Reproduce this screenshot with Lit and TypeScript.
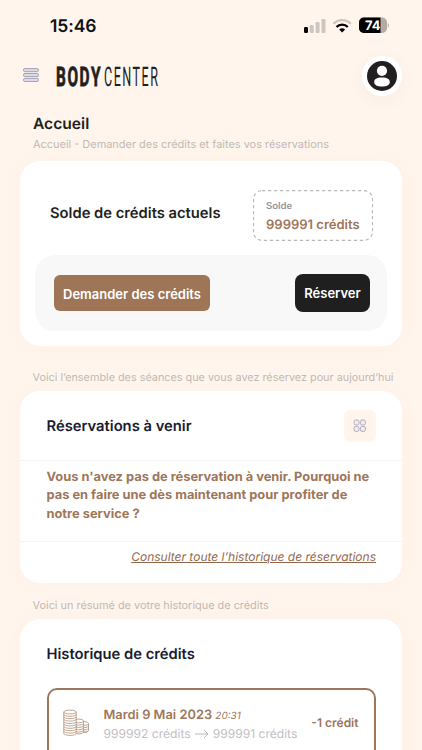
import { LitElement, html, css, svg } from "lit";
import { customElement } from "lit/decorators.js";

const coinStack = (x: number, top: number, rx: number, bottom: number, step: number) => {
  const rims = [];
  for (let y = top + step; y <= bottom; y += step) {
    rims.push(svg`<path d="M${x - rx} ${y}a${rx} 1.9 0 0 0 ${rx * 2} 0"/>`);
  }
  return svg`
    <path d="M${x - rx} ${top}V${bottom}a${rx} 1.9 0 0 0 ${rx * 2} 0V${top}z" fill="#fff"/>
    <ellipse cx=${x} cy=${top} rx=${rx} ry="1.9" fill="#fff"/>
    ${rims}`;
};

@customElement("app-root")
export class AppRoot extends LitElement {
  static styles = css`
    :host {
      display: block;
      height: 750px;
      overflow: hidden;
      background: #fff5ec;
      font-family: Inter, "Liberation Sans", sans-serif;
      color: #231f20;
      text-rendering: geometricPrecision;
    }
    * { box-sizing: border-box; }
    svg { display: block; flex: none; }
    .status {
      display: flex;
      align-items: center;
      height: 52px;
      padding: 0 33px 0 50px;
    }
    .time { flex: 1; padding-top: 1px; font-size: 17.5px; font-weight: 600; line-height: 22px; letter-spacing: -0.1px; color: #111; }
    .header {
      display: flex;
      align-items: center;
      height: 48px;
      padding: 0 20px 0 23px;
    }
    .logo { margin-left: 16px; overflow: visible; }
    .logo text { font-family: Roboto, sans-serif; font-size: 27px; fill: #231f20; }
    .logo .heavy { font-weight: 700; letter-spacing: 2.8px; stroke: #231f20; stroke-width: 0.8px; }
    .logo .light { font-weight: 400; letter-spacing: 3.2px; }
    .avatar {
      display: flex;
      align-items: center;
      justify-content: center;
      width: 40px;
      height: 40px;
      margin-left: auto;
      border-radius: 50%;
      background: #fff;
      box-shadow: 0 4px 16px rgba(150, 110, 110, 0.06);
    }
    .title { margin: 0; padding: 14px 33px 0; font-size: 15.6px; font-weight: 600; line-height: 20px; }
    .caption { height: 20px; padding-left: 33px; font-size: 10.95px; line-height: 20px; color: #c1b9b4; white-space: nowrap; }
    .crumb { margin-bottom: 7px; }
    .today { margin-top: 21px; margin-bottom: 4px; padding-left: 32.5px; font-size: 10.84px; }
    .summary { margin-top: 12px; margin-bottom: 4px; padding-left: 32.5px; font-size: 10.9px; }
    .card {
      width: 382px;
      margin-left: 20px;
      border-radius: 20px;
      background: #fff;
      box-shadow: 0 0 14px rgba(255, 225, 215, 0.22);
    }
    .balance { height: 185px; padding: 29px 15px 0; }
    .balance-top { display: flex; justify-content: space-between; align-items: flex-start; height: 51px; padding: 0 14px 0 15px; }
    .balance-top .h { padding-top: 12.5px; }
    .h { margin: 0; font-size: 14.75px; font-weight: 600; line-height: 20px; white-space: nowrap; }
    .credit-box { position: relative; width: 120px; height: 51px; padding: 9px 0 0 13px; }
    .dash { position: absolute; inset: 0; }
    .small { font-size: 9.6px; font-weight: 600; line-height: 16px; color: #98949a; }
    .amount { font-size: 13px; font-weight: 600; line-height: 20px; color: #9e765a; white-space: nowrap; }
    .actions {
      display: flex;
      justify-content: space-between;
      align-items: center;
      width: 352px;
      height: 76px;
      margin-top: 14px;
      padding: 0 17px 0 19px;
      border-radius: 20px;
      background: #f8f8f8;
    }
    .btn {
      display: flex;
      align-items: center;
      justify-content: center;
      border: 0;
      padding: 1px 0 0;
      font: 600 13px/20px Inter, sans-serif;
      color: #fff;
      white-space: nowrap;
    }
    .ask { width: 156px; height: 36px; border-radius: 6px; background: #9e7557; }
    .book { width: 75px; height: 38px; padding-top: 0; border-radius: 8px; background: #1f1f1f; }
    .upcoming { height: 192px; }
    .card-head { display: flex; align-items: center; justify-content: space-between; height: 70px; padding: 0 26px 0 26.5px; border-bottom: 1px solid #f4f4f5; }
    .navy { color: #181c32; }
    .grid-btn { display: flex; align-items: center; justify-content: center; width: 32px; height: 32px; border-radius: 6px; background: #fff5ec; }
    .empty { margin: 0; height: 80px; padding: 7.5px 26.5px 0; font-size: 12.85px; font-weight: 700; line-height: 18.5px; color: #9e765a; white-space: nowrap; }
    .link-row { display: flex; justify-content: flex-end; padding: 4.5px 26px 0; border-top: 1px solid #f4f4f5; }
    .link { font-size: 12px; font-style: italic; line-height: 20px; color: #93694d; text-decoration: underline; white-space: nowrap; }
    .history { height: 240px; }
    .history-head { height: 69px; padding: 24.5px 26.5px 0; }
    .entry {
      display: flex;
      align-items: flex-start;
      width: 329px;
      height: 90px;
      margin-left: 26.5px;
      padding: 15px 15px 0 14px;
      border: 2px solid #9e765a;
      border-radius: 10px;
    }
    .coins { margin-top: 4px; }
    .details { margin-left: 14px; padding-top: 1.5px; white-space: nowrap; }
    .date { font-size: 12.85px; font-weight: 600; line-height: 18px; color: #9e765a; }
    .hour { font-size: 10px; font-style: italic; font-weight: 400; }
    .change { display: flex; align-items: center; gap: 4px; font-size: 12.1px; line-height: 18px; color: #c3c0c3; }
    .delta { margin-left: auto; padding-top: 8px; font-size: 12px; font-weight: 600; line-height: 20px; color: #9e765a; white-space: nowrap; }
  `;

  render() {
    return html`
      <div class="status">
        <div class="time">15:46</div>
        <svg width="86" height="18" viewBox="0 0 86 18">
          <rect x="1" y="10" width="4" height="6" rx="1.2" fill="#000"/>
          <g fill="#cdc6bf">
            <rect x="6.7" y="8" width="4" height="8" rx="1.2"/>
            <rect x="12.6" y="5" width="4" height="11" rx="1.2"/>
            <rect x="18.5" y="2" width="4" height="14" rx="1.2"/>
          </g>
          <g fill="none" stroke-width="2.3">
            <path d="M30.5 6.8c4.7-5 12.6-5 17.3 0" stroke="#cdc6bf"/>
            <path d="M33.5 10c3.1-3.2 8.2-3.2 11.3 0" stroke="#000"/>
          </g>
          <path d="M36.2 12.4c1.7-1.4 4.2-1.4 5.9 0l-3 3.1z" fill="#000"/>
          <clipPath id="cell"><rect x="56" y="0.6" width="28" height="15.4" rx="4.7"/></clipPath>
          <g clip-path="url(#cell)">
            <rect x="56" y="0" width="28" height="17" fill="#b6aaa5"/>
            <rect x="56" y="0" width="21.5" height="17" fill="#000"/>
          </g>
          <text x="62" y="13" font-size="13" font-weight="700" fill="#fff" textLength="15.5" lengthAdjust="spacingAndGlyphs">74</text>
          <path d="M84.8 6q2.3 2.4 0 4.8z" fill="#b6aaa5"/>
        </svg>
      </div>

      <div class="header">
        <svg width="16" height="16" viewBox="0 0 16 16" fill="#dedbe4" stroke="#9c9bb0" stroke-width="0.9">
          <rect x="0.5" y="0.6" width="15" height="3.1" rx="1.4"/>
          <rect x="0.5" y="5.5" width="15" height="3.1" rx="1.4"/>
          <rect x="0.5" y="10.4" width="15" height="3.1" rx="1.4"/>
        </svg>
        <svg class="logo" width="105" height="34" viewBox="0 0 105 34">
          <text class="heavy" transform="translate(1 27) scale(0.57 1)">BODY</text>
          <text class="light" transform="translate(49 27) scale(0.465 1)">CENTER</text>
        </svg>
        <div class="avatar">
          <svg width="30" height="30" viewBox="0 0 30 30">
            <circle cx="15" cy="15" r="15" fill="#231f20"/>
            <circle cx="15" cy="9.8" r="5.1" fill="#fff"/>
            <path d="M7.2 21.2c0-3 2.5-4.6 7.8-4.6s7.8 1.6 7.8 4.6c0 2.5-3.2 4.4-7.8 4.4s-7.8-1.9-7.8-4.4z" fill="#fff"/>
          </svg>
        </div>
      </div>

      <h1 class="title">Accueil</h1>
      <div class="caption crumb">Accueil - Demander des crédits et faites vos réservations</div>

      <section class="card balance">
        <div class="balance-top">
          <h2 class="h">Solde de crédits actuels</h2>
          <div class="credit-box">
            <svg class="dash" width="120" height="51">
              <rect x="0.5" y="0.7" width="119" height="49.6" rx="8.5" fill="none" stroke="#b9b7bd" stroke-width="1.2" stroke-dasharray="3.3 2.7"/>
            </svg>
            <div class="small">Solde</div>
            <div class="amount">999991 crédits</div>
          </div>
        </div>
        <div class="actions">
          <button class="btn ask">Demander des crédits</button>
          <button class="btn book">Réserver</button>
        </div>
      </section>

      <div class="caption today">Voici l’ensemble des séances que vous avez réservez pour aujourd’hui</div>

      <section class="card upcoming">
        <div class="card-head">
          <h2 class="h navy">Réservations à venir</h2>
          <div class="grid-btn">
            <svg width="14" height="14" viewBox="0 0 14 14" fill="#f3eaea" stroke="#b3aebf" stroke-width="1">
              <rect x="1" y="1" width="5" height="5" rx="1.6"/>
              <rect x="7.4" y="1" width="5" height="5" rx="1.6"/>
              <rect x="1" y="7.4" width="5" height="5" rx="1.6"/>
              <rect x="7.4" y="7.4" width="5" height="5" rx="1.6"/>
            </svg>
          </div>
        </div>
        <p class="empty">Vous n'avez pas de réservation à venir. Pourquoi ne<br>pas en faire une dès maintenant pour profiter de<br>notre service ?</p>
        <div class="link-row"><a class="link">Consulter toute l’historique de réservations</a></div>
      </section>

      <div class="caption summary">Voici un résumé de votre historique de crédits</div>

      <section class="card history">
        <div class="history-head"><h2 class="h navy">Historique de crédits</h2></div>
        <div class="entry">
          <svg class="coins" width="27" height="28" viewBox="0 0 27 28" fill="none" stroke="#b28f75" stroke-width="0.8">
            ${coinStack(20.5, 14.5, 5, 21.5, 2.3)}
            ${coinStack(15.5, 12, 5, 23, 2.3)}
            ${coinStack(7, 3, 6.2, 24.5, 2.4)}
          </svg>
          <div class="details">
            <div class="date">Mardi 9 Mai 2023 <span class="hour">20:31</span></div>
            <div class="change">
              <span>999992 crédits</span>
              <svg width="14" height="10" viewBox="0 0 14 10" fill="none" stroke="#bbb8bb" stroke-width="1"><path d="M0 5h13M9 1l4 4-4 4"/></svg>
              <span>999991 crédits</span>
            </div>
          </div>
          <div class="delta">-1 crédit</div>
        </div>
      </section>
    `;
  }
}
